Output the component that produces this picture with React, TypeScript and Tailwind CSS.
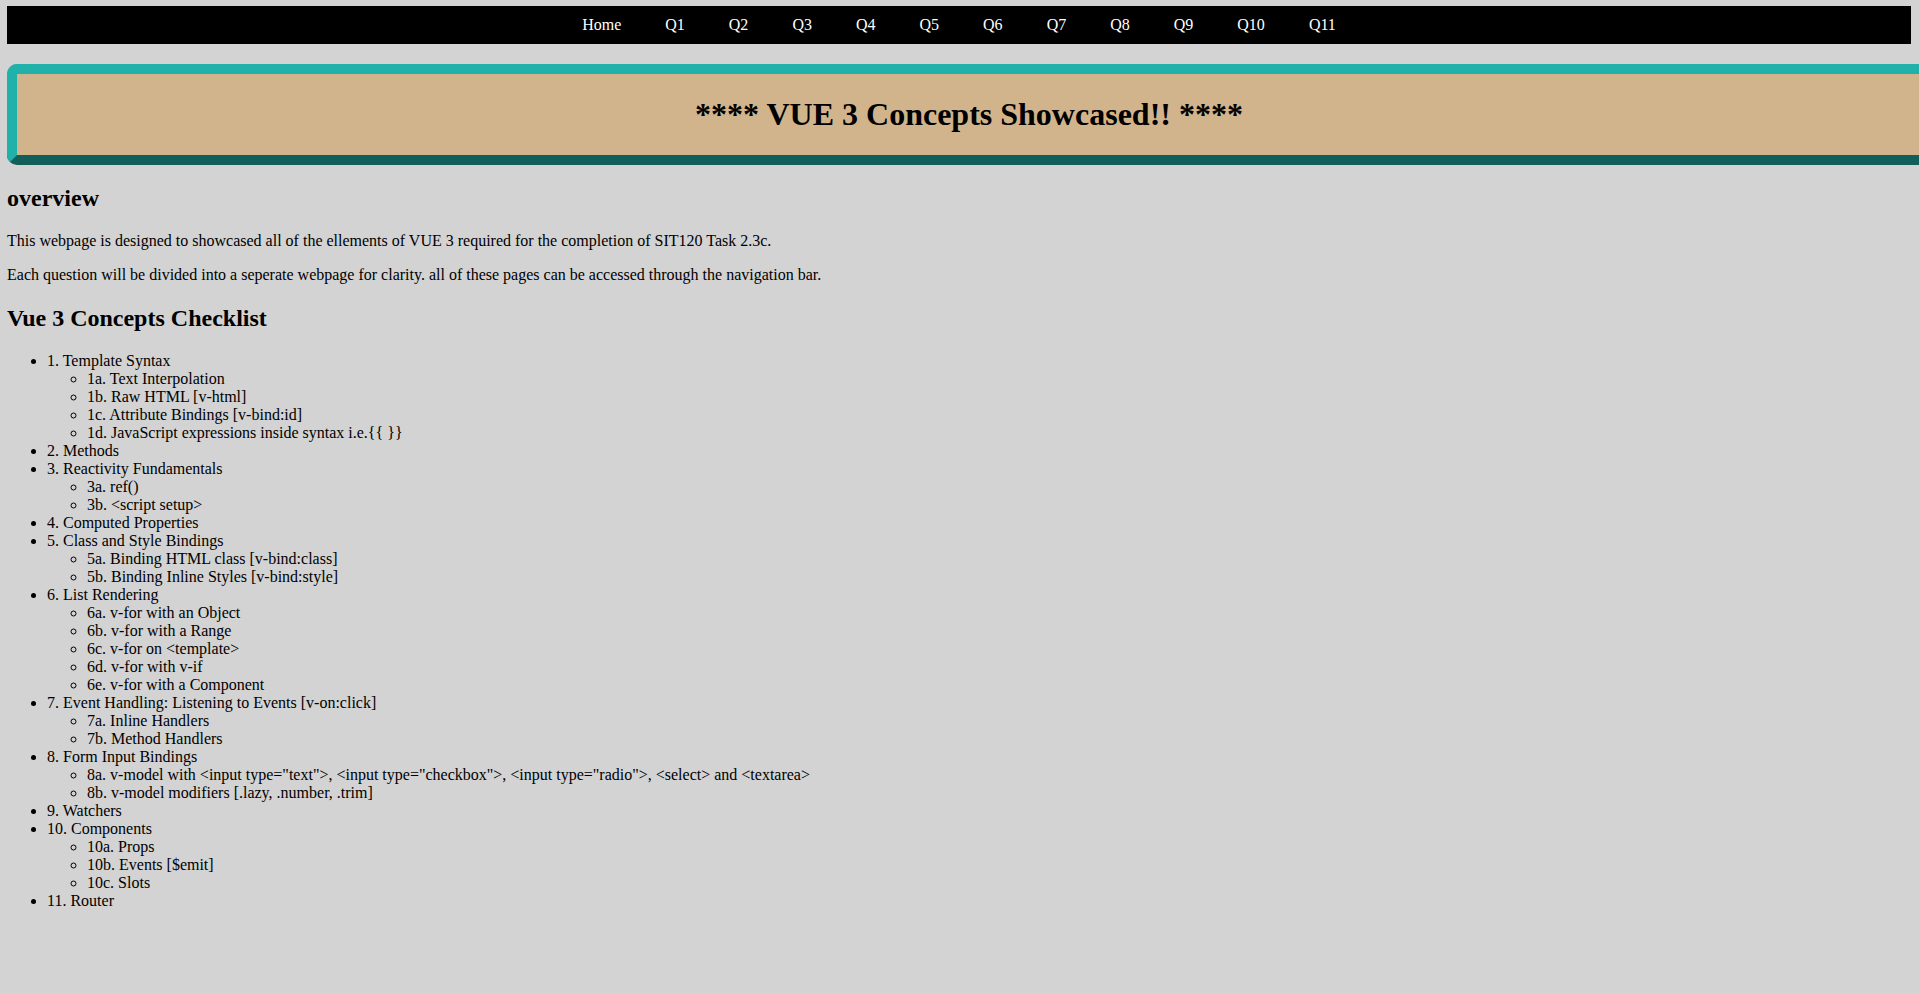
import React from "react";

type Item = { label: string; children?: string[] };

const items: Item[] = [
  {
    label: "1. Template Syntax",
    children: [
      "1a. Text Interpolation",
      "1b. Raw HTML [v-html]",
      "1c. Attribute Bindings [v-bind:id]",
      "1d. JavaScript expressions inside syntax i.e.{{ }}",
    ],
  },
  { label: "2. Methods" },
  { label: "3. Reactivity Fundamentals", children: ["3a. ref()", "3b. <script setup>"] },
  { label: "4. Computed Properties" },
  {
    label: "5. Class and Style Bindings",
    children: ["5a. Binding HTML class [v-bind:class]", "5b. Binding Inline Styles [v-bind:style]"],
  },
  {
    label: "6. List Rendering",
    children: [
      "6a. v-for with an Object",
      "6b. v-for with a Range",
      "6c. v-for on <template>",
      "6d. v-for with v-if",
      "6e. v-for with a Component",
    ],
  },
  {
    label: "7. Event Handling: Listening to Events [v-on:click]",
    children: ["7a. Inline Handlers", "7b. Method Handlers"],
  },
  {
    label: "8. Form Input Bindings",
    children: [
      '8a. v-model with <input type="text">, <input type="checkbox">, <input type="radio">, <select> and <textarea>',
      "8b. v-model modifiers [.lazy, .number, .trim]",
    ],
  },
  { label: "9. Watchers" },
  { label: "10. Components", children: ["10a. Props", "10b. Events [$emit]", "10c. Slots"] },
  { label: "11. Router" },
];

const navLinks = ["Home", "Q1", "Q2", "Q3", "Q4", "Q5", "Q6", "Q7", "Q8", "Q9", "Q10", "Q11"];

export default function App() {
  return (
    <div className="min-h-screen overflow-x-hidden bg-[#d3d3d3] pt-[6px] pl-[7px] pr-[8px] pb-8 font-['Liberation_Serif','Times_New_Roman',serif] text-[16px] leading-[18px] text-black">
      <nav className="flex h-[38px] items-center justify-center bg-black">
        {navLinks.map((l) => (
          <a key={l} href="#" className="px-[22px] text-[16px] leading-[18px] text-white">
            {l}
          </a>
        ))}
      </nav>

      <div className="mt-[20px] box-content w-full rounded-[10px] border-[10px] border-solid border-t-[#20b2aa] border-l-[#20b2aa] border-b-[#115e5a] border-r-[#115e5a] bg-[#d2b48c]">
        <h1 className="my-[21.44px] text-center text-[32px] font-bold leading-[38px]">
          **** VUE 3 Concepts Showcased!! ****
        </h1>
      </div>

      <h2 className="mt-[20.5px] mb-[19.92px] text-[24px] font-bold leading-[normal]">overview</h2>
      <p className="my-4">
        This webpage is designed to showcased all of the ellements of VUE 3 required for the completion of SIT120 Task 2.3c.
      </p>
      <p className="my-4">
        Each question will be divided into a seperate webpage for clarity. all of these pages can be accessed through the navigation bar.
      </p>

      <h2 className="mt-[20.5px] mb-[19.92px] text-[24px] font-bold leading-[normal]">Vue 3 Concepts Checklist</h2>
      <ul className="my-4 list-disc pl-10">
        {items.map((it) => (
          <li key={it.label}>
            {it.label}
            {it.children && (
              <ul className="list-[circle] pl-10">
                {it.children.map((c) => (
                  <li key={c}>{c}</li>
                ))}
              </ul>
            )}
          </li>
        ))}
      </ul>
    </div>
  );
}
